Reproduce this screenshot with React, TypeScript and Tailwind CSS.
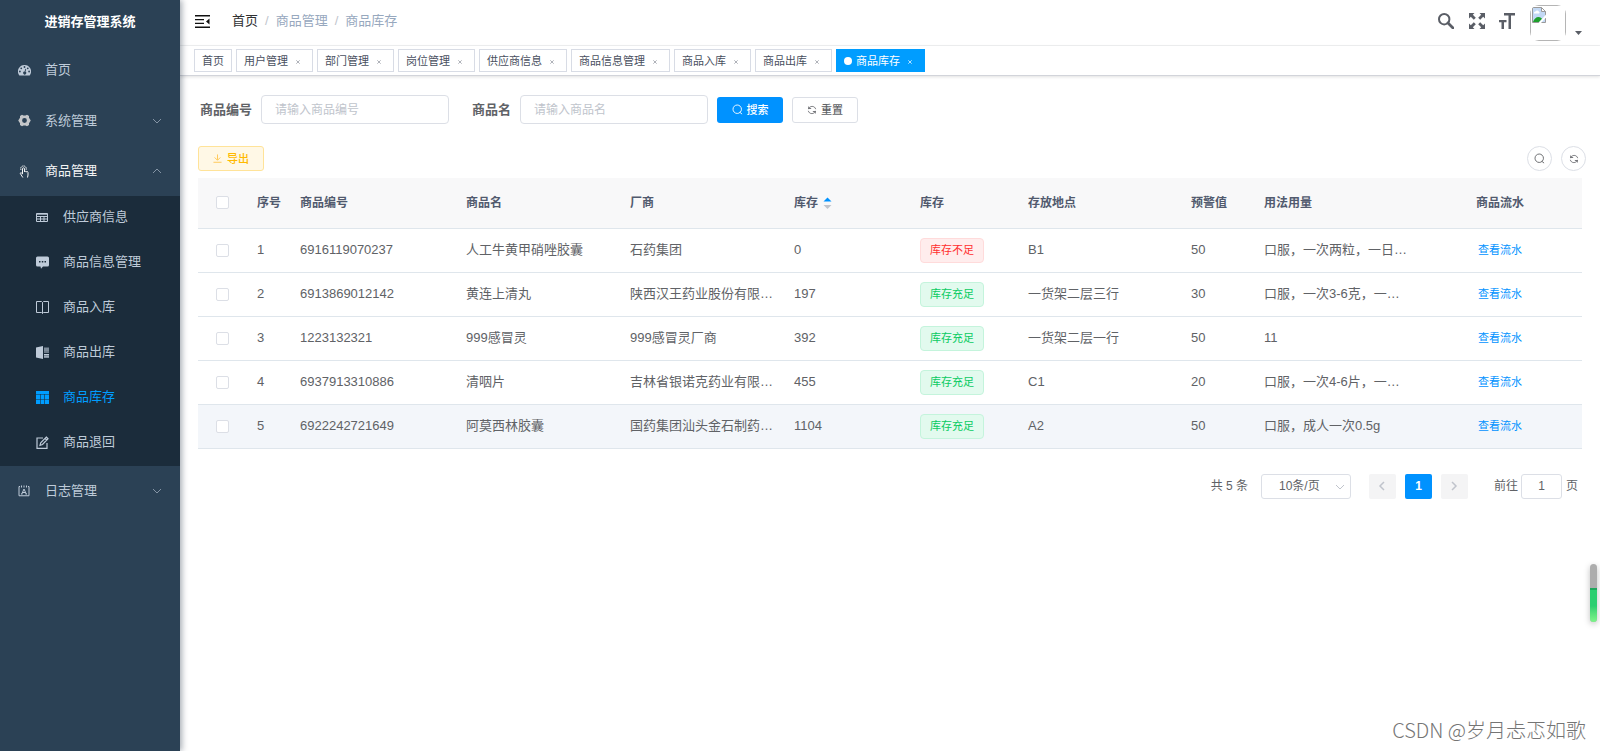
import { FC, ReactNode, useState } from "react";

type Tab = { name: string; closable: boolean };

type Stock = {
  id: number;
  code: string;
  name: string;
  factory: string;
  stock: number;
  place: string;
  warning: number;
  usage: string;
};

type SubMenu = { name: string; icon: ReactNode };

const tabs: Tab[] = [
  { name: "首页", closable: false },
  { name: "用户管理", closable: true },
  { name: "部门管理", closable: true },
  { name: "岗位管理", closable: true },
  { name: "供应商信息", closable: true },
  { name: "商品信息管理", closable: true },
  { name: "商品入库", closable: true },
  { name: "商品出库", closable: true },
  { name: "商品库存", closable: true },
];

const stocks: Stock[] = [
  { id: 1, code: "6916119070237", name: "人工牛黄甲硝唑胶囊", factory: "石药集团", stock: 0, place: "B1", warning: 50, usage: "口服，一次两粒，一日三次" },
  { id: 2, code: "6913869012142", name: "黄连上清丸", factory: "陕西汉王药业股份有限公司", stock: 197, place: "一货架二层三行", warning: 30, usage: "口服，一次3-6克，一日两次" },
  { id: 3, code: "1223132321", name: "999感冒灵", factory: "999感冒灵厂商", stock: 392, place: "一货架二层一行", warning: 50, usage: "11" },
  { id: 4, code: "6937913310886", name: "清咽片", factory: "吉林省银诺克药业有限公司", stock: 455, place: "C1", warning: 20, usage: "口服，一次4-6片，一日两次" },
  { id: 5, code: "6922242721649", name: "阿莫西林胶囊", factory: "国药集团汕头金石制药公司", stock: 1104, place: "A2", warning: 50, usage: "口服，成人一次0.5g" },
];

const Chevron: FC<{ className: string }> = ({ className }) => (
  <svg viewBox="0 0 10 10" className={className} fill="none" stroke="currentColor">
    <path d="M1 3l4 4 4-4" />
  </svg>
);

const SearchIcon: FC<{ className: string }> = ({ className }) => (
  <svg viewBox="0 0 12 12" className={className} fill="none" stroke="currentColor">
    <circle cx="5.7" cy="5.7" r="4.6" />
    <path d="M8.500 9l2.500 2" />
  </svg>
);

const RefreshIcon: FC<{ className: string }> = ({ className }) => (
  <svg viewBox="0 0 12 12" className={className} fill="none" stroke="currentColor">
    <path d="M2 5V1.8M2 4.2h3M2 4.2C3 2.6 4.5 1.7 6.2 1.7c2.2 0 3.8 1.4 4.2 3.3M10 7v3.2M10 7.8H7M10 7.8C9 9.4 7.5 10.3 5.8 10.3 3.6 10.3 2 8.900 1.600 7" />
  </svg>
);

const DashboardIcon = () => (
  <svg viewBox="0 0 26 22" className="w-[13px] h-[11px]" fill="currentColor">
    <path
      fillRule="evenodd"
      d="M13 0a13 13 0 0 0-11 20c.4.700 1 1 1.700 1h18.600c.7 0 1.300-.3 1.700-1A13 13 0 0 0 13 0zM13 2.200a1.800 1.800 0 1 1 0 3.600 1.800 1.800 0 0 1 0-3.600zM6.500 4.800a1.800 1.800 0 1 1 0 3.600 1.800 1.800 0 0 1 0-3.600zM19.500 4.800a1.800 1.800 0 1 1 0 3.600 1.800 1.800 0 0 1 0-3.600zM3.800 11.200a1.800 1.800 0 1 1 0 3.600 1.800 1.800 0 0 1 0-3.600zM22.200 11.200a1.800 1.800 0 1 1 0 3.600 1.800 1.800 0 0 1 0-3.600zM14.700 7.500l1.700.500-1.400 5.600a3 3 0 1 1-1.800-.500z"
    />
  </svg>
);

const SystemIcon = () => (
  <svg viewBox="0 0 26 26" className="w-[13px] h-[13px]" fill="#c4c6c9">
    <path
      fillRule="evenodd"
      d="M8 1.500l3 1.500h4l3-1.500 4 2.500v3.500l2 3 1.500 2.500-1.500 2.500-2 3V22l-4 2.500-3-1.500h-4l-3 1.500L4 22v-3.500l-2-3L.500 13 2 10.500l2-3V4zM13 8.200a4.800 4.800 0 1 0 0 9.600 4.800 4.800 0 0 0 0-9.600z"
    />
  </svg>
);

const HandIcon = () => (
  <svg viewBox="0 0 13 13" className="w-[13px] h-[13px]" fill="none" stroke="currentColor">
    <path d="M4.500 9V3.800a1 1 0 0 1 2 0V7M6.500 6.500c1.500-.4 1.700 0 1.800.800M8.300 6.500c1.300-.3 1.500.200 1.700 1v2.500L9.500 12.500M4.500 8.800C3.300 7.500 2 7.500 2.300 8.500L4.800 12.500" />
    <path d="M3 5A2.800 2.800 0 1 1 8 5" strokeDasharray="1.500 .5" />
  </svg>
);

const LogIcon = () => (
  <svg viewBox="0 0 24 24" className="w-[12px] h-[12px]" fill="none" stroke="currentColor" strokeWidth="2">
    <path d="M2 3v18.500h20V3M2 3h2M7 1v4M12 1v4M17 1v4M20 3h2" />
    <path d="M7.500 18L12 8l4.500 10M9 15h6M6 18h3M15 18h3" />
  </svg>
);

const subMenus: SubMenu[] = [
  {
    name: "供应商信息",
    icon: (
      <svg viewBox="0 0 13 13" className="w-[13px] h-[13px]" fill="none" stroke="currentColor">
        <path d="M.5 2.500h11v8H.500zM.5 5.500h11M.5 8h11M4.500 5.500v5M8 5.500v5M.5 3.200h11" />
      </svg>
    ),
  },
  {
    name: "商品信息管理",
    icon: (
      <svg viewBox="0 0 13 13" className="w-[13px] h-[13px]" fill="currentColor">
        <path
          fillRule="evenodd"
          d="M1.500.500h10A1.500 1.500 0 0 1 13 2v7a1.500 1.500 0 0 1-1.500 1.500H7L5 12.800 4.500 10.500h-3A1.500 1.500 0 0 1 0 9V2A1.500 1.500 0 0 1 1.500.500zM3 5v1.400h1.500V5zM5.800 5v1.400h1.500V5zM8.500 5v1.400H10V5z"
        />
      </svg>
    ),
  },
  {
    name: "商品入库",
    icon: (
      <svg viewBox="0 0 13 13" className="w-[13px] h-[13px]" fill="none" stroke="currentColor">
        <path d="M.5.500h5l1 1 1-1h5v11h-5l-1 1-1-1h-5zM6.500 1.500v11" />
      </svg>
    ),
  },
  {
    name: "商品出库",
    icon: (
      <svg viewBox="0 0 13 13" className="w-[13px] h-[13px]" fill="currentColor">
        <path d="M0 1.500L7 0v13l-7-1.500z" />
        <path opacity=".6" d="M8 1.500h5V5H8zM8 9h5v2.500H8z" />
        <path d="M8 5.500h5v1H8zM8 8h5v1H8zM8 10.500h5v1H8z" />
      </svg>
    ),
  },
  {
    name: "商品库存",
    icon: (
      <svg viewBox="0 0 13 13" className="w-[13px] h-[13px]" fill="currentColor">
        <path d="M0 0h13v3H0zM0 3.600h4v4.400H0zM4.600 3.600h3.800v4.400H4.600zM9 3.600h4v4.400H9zM0 8.600h4V13H0zM4.600 8.600h3.800V13H4.600zM9 8.600h4V13H9z" />
      </svg>
    ),
  },
  {
    name: "商品退回",
    icon: (
      <svg viewBox="0 0 13 13" className="w-[13px] h-[13px]" fill="none" stroke="currentColor" strokeWidth="1.2">
        <path d="M7 2H1v10.400h10V7" />
        <path d="M10.300 1L12 2.700 6.500 8.500 4 9.300 4.700 6.800zM9 2.300L10.800 4" />
      </svg>
    ),
  },
];

const Sidebar: FC = () => (
  <aside className="z-10 w-[180px] shrink-0 bg-[#2b4155] text-[#bfcbd9] text-[13px] shadow-[2px_0_6px_rgba(0,21,41,0.35)]">
    <h1 className="h-[46px] pb-[3px] flex items-center justify-center text-white text-[13px] font-bold">
      进销存管理系统
    </h1>
    <nav>
      <a href="#home" className="h-[50px] pb-[2px] pl-[18px] flex items-center">
        <DashboardIcon />
        <span className="ml-[14px]">首页</span>
      </a>
      <button type="button" className="w-full h-[50px] pb-px pl-[18px] pr-[18px] flex items-center">
        <SystemIcon />
        <span className="ml-[14px]">系统管理</span>
        <Chevron className="ml-auto w-[10px] h-[10px] text-[#8494a5]" />
      </button>
      <button type="button" className="w-full h-[50px] pl-[18px] pr-[18px] flex items-center text-[#f4f4f5]">
        <HandIcon />
        <span className="ml-[14px]">商品管理</span>
        <Chevron className="ml-auto w-[10px] h-[10px] rotate-180 text-[#8494a5]" />
      </button>
      <ul className="bg-[#1b2c3b]">
        {subMenus.map((menu) => (
          <li key={menu.name}>
            <a
              href="#stock"
              className={`h-[45px] pb-[3px] pl-9 flex items-center gap-[14px] ${
                menu.name === "商品库存" ? "text-[#009dff]" : ""
              }`}
            >
              {menu.icon}
              <span>{menu.name}</span>
            </a>
          </li>
        ))}
      </ul>
      <button type="button" className="w-full h-[50px] pl-[18px] pr-[18px] flex items-center">
        <LogIcon />
        <span className="ml-[15px]">日志管理</span>
        <Chevron className="ml-auto w-[10px] h-[10px] text-[#8494a5]" />
      </button>
    </nav>
  </aside>
);

// 头像加载失败时的占位图
const Avatar: FC = () => (
  <span className="w-9 h-9 rounded-[9px] overflow-hidden">
    <span className="flex w-9 h-9 p-px border border-[#b5b5b5]">
      <svg viewBox="0 0 14 16" className="w-[14px] h-4">
        <path d="M.5.500h9l4 4v11H.500z" fill="#c3d9f5" stroke="#9a9a9a" />
        <path d="M9.500.500v4h4z" fill="#fff" stroke="#9a9a9a" />
        <path d="M2 6.500a1.500 1.500 0 0 1 1.500-2 1.800 1.800 0 0 1 3.300 0A1.200 1.200 0 0 1 7 6.500z" fill="#fff" />
        <path d="M1 15c1-3 3-5 5.500-5 2 0 3 1 3.500 2l-3 3z" fill="#1fa02c" />
        <path d="M14 7.500L6.500 16H9l5-5.500z" fill="#fff" />
      </svg>
    </span>
  </span>
);

const Navbar: FC = () => (
  <div className="h-[46px] pb-[3px] pl-[15px] pr-[18px] flex items-center border-b border-[#f0f1f2]">
    <button type="button" aria-label="折叠菜单">
      <svg viewBox="0 0 15 13" className="w-[15px] h-[13px]" fill="#111">
        <path d="M0 0h15v1.400H0zM0 4h9v1.300H0zM0 7.700h9V9H0zM0 11.600h15V13H0zM14.500 3.500v6L11 6.500z" />
      </svg>
    </button>
    <nav className="ml-[22px] flex items-center gap-[7px] text-[13px] text-[#97a8be]">
      <a href="#home" className="text-[#303133]">首页</a>
      <span className="text-[#c0c4cc]">/</span>
      <span>商品管理</span>
      <span className="text-[#c0c4cc]">/</span>
      <span>商品库存</span>
    </nav>
    <div className="ml-auto flex items-center text-[#5a5e66]">
      <button type="button" aria-label="搜索菜单">
        <svg viewBox="0 0 16 16" className="w-4 h-4" fill="none" stroke="currentColor">
          <circle cx="6.200" cy="6.200" r="5.200" strokeWidth="2" />
          <path d="M10 10l5 5" strokeWidth="2.800" strokeLinecap="round" />
        </svg>
      </button>
      <button type="button" aria-label="全屏" className="ml-[15px]">
        <svg viewBox="0 0 16 16" className="w-4 h-4" fill="currentColor">
          <path d="M0 0h5.500L3.800 1.800l3 3-2 2-3-3L0 5.500zM16 0v5.500l-1.800-1.700-3 3-2-2 3-3L10.500 0zM0 16v-5.500l1.800 1.700 3-3 2 2-3 3L5.500 16zM16 16h-5.500l1.700-1.800-3-3 2-2 3 3 1.800-1.700z" />
        </svg>
      </button>
      <button type="button" aria-label="布局大小" className="ml-[14px]">
        <svg viewBox="0 0 16 16" className="w-4 h-4" fill="currentColor">
          <path d="M5 0h11v2.500h-4V16H9.500V2.500H5zM0 7h7.500v2.300h-2.500V16H2.500V9.300H0z" />
        </svg>
      </button>
      <button type="button" aria-label="用户菜单" className="ml-[15px] mt-[3px] flex items-end gap-[9px]">
        <Avatar />
        <svg viewBox="0 0 7 4" className="w-[7px] h-1 mb-[6px]" fill="currentColor">
          <path d="M0 0h7L3.500 4z" />
        </svg>
      </button>
    </div>
  </div>
);

const TagsView: FC = () => (
  <div className="h-[30px] pl-[14px] flex items-center gap-1 border-b border-[#d2d4da] shadow-[0_1px_3px_rgba(0,0,0,0.12)]">
    {tabs.map((tab) => {
      const active = tab.name === "商品库存";
      return (
        <a
          key={tab.name}
          href="#tab"
          className={`h-[23px] px-[7px] flex items-center border text-[11px] whitespace-nowrap ${
            active
              ? "bg-[#009dff] border-[#009dff] text-white"
              : "bg-white border-[#d8dce5] text-[#495060]"
          }`}
        >
          {active && <span className="w-2 h-2 mr-1 rounded-full bg-white" />}
          {tab.name}
          {tab.closable && (
            <svg
              viewBox="0 0 4 4"
              className={`w-1 h-1 mt-0.5 ml-2 mr-[5px] ${active ? "text-white" : "text-[#8c919b]"}`}
              stroke="currentColor"
              strokeWidth=".7"
            >
              <path d="M.3.300l3.400 3.400M3.700.300L.300 3.700" />
            </svg>
          )}
        </a>
      );
    })}
  </div>
);

const checkboxClass =
  "block w-[13px] h-[13px] ml-[18px] appearance-none rounded-xs border border-[#dcdfe6] bg-white checked:bg-[#0092ff]";

const StockTable: FC = () => (
  <table className="w-full table-fixed border-collapse text-left text-[13px] text-[#606266]">
    <colgroup>
      <col className="w-[50px]" />
      <col className="w-[43px]" />
      <col className="w-[166px]" />
      <col className="w-[164px]" />
      <col className="w-[164px]" />
      <col className="w-[126px]" />
      <col className="w-[108px]" />
      <col className="w-[163px]" />
      <col className="w-[73px]" />
      <col className="w-[163px]" />
      <col />
    </colgroup>
    <thead>
      <tr className="h-[50px] bg-[#f8f8f9] border-b border-[#dfe6ec] text-xs text-[#515a6e] whitespace-nowrap">
        <th>
          <input type="checkbox" aria-label="全选" className={checkboxClass} />
        </th>
        <th className="pl-[9px]">序号</th>
        <th className="pl-[9px]">商品编号</th>
        <th className="pl-[9px]">商品名</th>
        <th className="pl-[9px]">厂商</th>
        <th className="pl-[9px]">
          <button type="button" className="flex items-center gap-[5px] font-bold">
            库存
            <svg viewBox="0 0 9 12" className="w-[9px] h-3">
              <path d="M.5 4.500h8L4.500.500z" fill="#0092ff" />
              <path d="M.5 8h8l-4 4z" fill="#c0c4cc" />
            </svg>
          </button>
        </th>
        <th className="pl-[9px]">库存</th>
        <th className="pl-[9px]">存放地点</th>
        <th className="pl-[9px]">预警值</th>
        <th className="pl-[9px]">用法用量</th>
        <th className="text-center">商品流水</th>
      </tr>
    </thead>
    <tbody>
      {stocks.map((row) => (
        <tr key={row.id} className="h-[44px] border-b border-[#dfe6ec] last:bg-[#f3f6fa]">
          <td>
            <input type="checkbox" aria-label={`选择${row.name}`} className={checkboxClass} />
          </td>
          <td className="pl-[9px]">{row.id}</td>
          <td className="pl-[9px]">{row.code}</td>
          <td className="px-[9px] truncate">{row.name}</td>
          <td className="px-[9px] truncate">{row.factory}</td>
          <td className="pl-[9px]">{row.stock}</td>
          <td className="pl-[9px]">
            <span
              className={`inline-flex items-center h-[25px] px-[9px] rounded-[4px] border text-[11px] align-middle whitespace-nowrap ${
                row.stock < row.warning
                  ? "bg-[#ffeded] border-[#ffdbdb] text-[#ff2f2f]"
                  : "bg-[#e2faee] border-[#c4f4dc] text-[#0acb62]"
              }`}
            >
              {row.stock < row.warning ? "库存不足" : "库存充足"}
            </span>
          </td>
          <td className="px-[9px] truncate">{row.place}</td>
          <td className="pl-[9px]">{row.warning}</td>
          <td className="px-[9px] truncate">{row.usage}</td>
          <td className="text-center">
            <a href="#flow" className="text-[11px] text-[#0092ff]">
              查看流水
            </a>
          </td>
        </tr>
      ))}
    </tbody>
  </table>
);

const Pagination: FC = () => {
  const [page, setPage] = useState("1");

  return (
    <div className="mt-[25px] pr-1 flex items-center justify-end text-xs text-[#606266]">
      <span>共 5 条</span>
      <div className="relative ml-[13px]">
        <select
          aria-label="每页条数"
          className="block w-[90px] h-[25px] pl-[17px] appearance-none rounded-[3px] border border-[#dcdfe6] bg-white"
        >
          <option>10条/页</option>
          <option>20条/页</option>
        </select>
        <Chevron className="absolute right-[6px] top-2 w-[10px] h-[10px] text-[#c0c4cc] pointer-events-none" />
      </div>
      <div className="ml-[18px] flex gap-[9px]">
        <button
          type="button"
          disabled
          aria-label="上一页"
          className="w-[27px] h-[25px] flex items-center justify-center rounded-xs bg-[#f4f4f5] text-[#c0c4cc]"
        >
          <Chevron className="w-[10px] h-[10px] rotate-90 stroke-[1.5]" />
        </button>
        <button type="button" className="w-[27px] h-[25px] rounded-xs bg-[#0092ff] text-white font-bold">
          1
        </button>
        <button
          type="button"
          disabled
          aria-label="下一页"
          className="w-[27px] h-[25px] flex items-center justify-center rounded-xs bg-[#f4f4f5] text-[#c0c4cc]"
        >
          <Chevron className="w-[10px] h-[10px] -rotate-90 stroke-[1.5]" />
        </button>
      </div>
      <label htmlFor="page" className="ml-[26px]">前往</label>
      <input
        id="page"
        value={page}
        onChange={(e) => setPage(e.target.value)}
        className="w-[41px] h-[25px] ml-[3px] mr-1 rounded-[3px] border border-[#dcdfe6] text-center focus:outline-none"
      />
      <span>页</span>
    </div>
  );
};

const App: FC = () => {
  return (
    <div className="relative min-h-screen flex bg-white font-['Liberation_Sans','Noto_Sans_CJK_SC',sans-serif] leading-5">
      <Sidebar />
      <div className="flex-1 min-w-0">
        <Navbar />
        <TagsView />
        <main className="pt-[19px] px-[18px]">
          <form className="flex items-center text-[13px]">
            <label htmlFor="code" className="pl-[2px] font-bold text-[#606266]">商品编号</label>
            <input
              id="code"
              type="text"
              placeholder="请输入商品编号"
              className="w-[188px] h-[29px] ml-[9px] px-[13px] text-xs rounded-[4px] border border-[#dcdfe6] placeholder:text-[#c0c4cc] focus:outline-none"
            />
            <label htmlFor="name" className="ml-[23px] font-bold text-[#606266]">商品名</label>
            <input
              id="name"
              type="text"
              placeholder="请输入商品名"
              className="w-[188px] h-[29px] ml-[9px] px-[13px] text-xs rounded-[4px] border border-[#dcdfe6] placeholder:text-[#c0c4cc] focus:outline-none"
            />
            <button
              type="button"
              className="w-[66px] h-[26px] ml-[9px] flex items-center justify-center gap-1 rounded-[3px] bg-[#0092ff] text-white text-[11px] font-medium"
            >
              <SearchIcon className="w-[11px] h-[11px]" />
              搜索
            </button>
            <button
              type="reset"
              className="w-[66px] h-[26px] ml-[9px] flex items-center justify-center gap-1 rounded-[3px] border border-[#dcdfe6] text-[#606266] text-[11px] font-medium"
            >
              <RefreshIcon className="w-[10px] h-[10px]" />
              重置
            </button>
          </form>

          <div className="mt-[22px] mb-[7px] flex items-center">
            <button
              type="button"
              className="w-[66px] h-[25px] flex items-center justify-center gap-[5px] rounded-[3px] border border-[#ffe399] bg-[#fff8e6] text-[#ffba00] text-[11px] font-medium"
            >
              <svg viewBox="0 0 10 10" className="w-[9px] h-[9px] text-[#ffc54d]" fill="none" stroke="currentColor">
                <path d="M5 .500v6M1.800 3.800L5 7l3.200-3.200M.5 9.200h9" />
              </svg>
              导出
            </button>
            <div className="ml-auto -mr-1 flex gap-[9px] text-[#606266]">
              <button
                type="button"
                aria-label="隐藏搜索"
                className="w-[25px] h-[25px] flex items-center justify-center rounded-full border border-[#dcdfe6]"
              >
                <SearchIcon className="w-[11px] h-[11px]" />
              </button>
              <button
                type="button"
                aria-label="刷新"
                className="w-[25px] h-[25px] flex items-center justify-center rounded-full border border-[#dcdfe6]"
              >
                <RefreshIcon className="w-[10px] h-[10px]" />
              </button>
            </div>
          </div>

          <StockTable />
          <Pagination />
        </main>
      </div>

      {/* 右侧悬浮滚动指示 */}
      <div className="absolute right-[3px] top-[564px] w-[7px] h-[58px] rounded-full overflow-hidden bg-[#adadad] flex flex-col justify-end shadow-[0_2px_6px_rgba(0,0,0,0.25)]">
        <div className="h-[34px] border-t-2 border-[#1ea75c] bg-linear-to-b from-[#2bcf70] from-50% to-[#7df58a]" />
      </div>
      <p className="absolute right-[14px] bottom-[7px] font-['Noto_Sans_CJK_SC',sans-serif] text-[20px] leading-7 font-light text-[#757575]">
        CSDN @岁月忐忑如歌
      </p>
    </div>
  );
};

export default App;
